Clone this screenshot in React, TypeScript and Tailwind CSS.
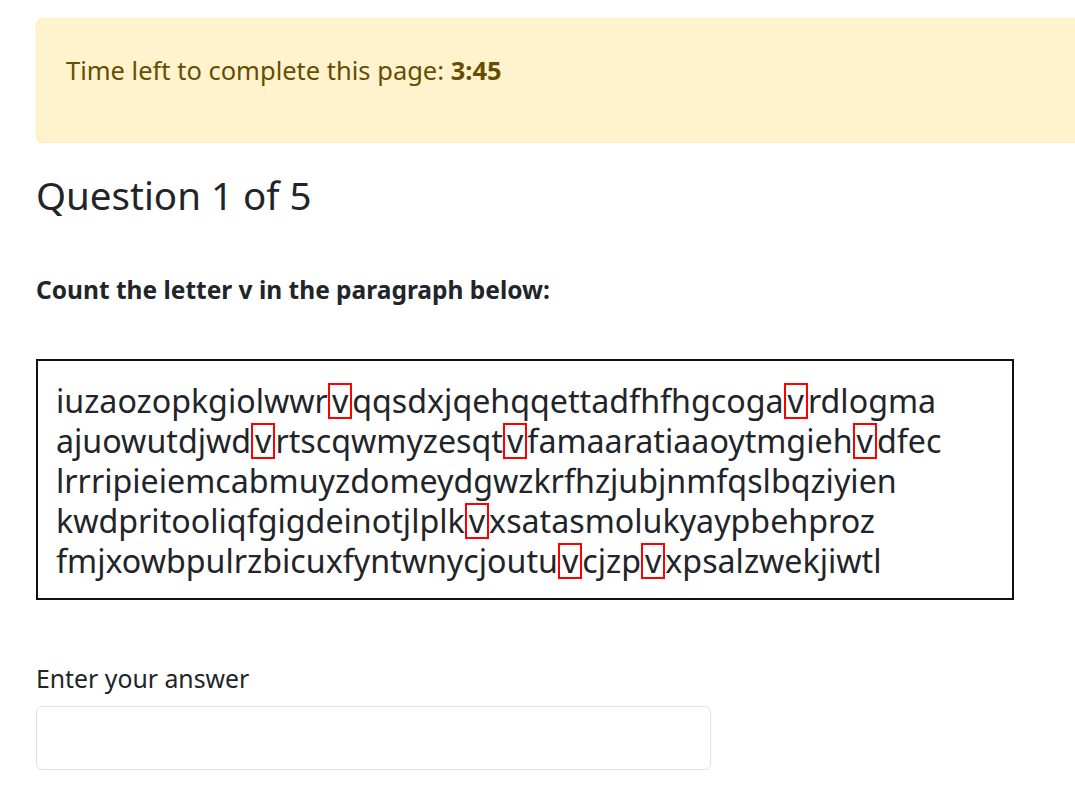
const lines = [
  "iuzaozopkgiolwwrvqqsdxjqehqqettadfhfhgcogavrdlogma",
  "ajuowutdjwdvrtscqwmyzesqtvfamaaratiaaoytmgiehvdfec",
  "lrrripieiemcabmuyzdomeydgwzkrfhzjubjnmfqslbqziyien",
  "kwdpritooliqfgigdeinotjlplkvxsatasmolukyaypbehproz",
  "fmjxowbpulrzbicuxfyntwnycjoutuvcjzpvxpsalzwekjiwtl",
];

const Line = ({ text }: { text: string }) => {
  const parts = text.split("v");
  return (
    <div>
      {parts.map((part, i) => (
        <span key={i}>
          {part}
          {i < parts.length - 1 && (
            <span className="inline-block border-2 border-[#ff0000] px-[2px] leading-none">
              v
            </span>
          )}
        </span>
      ))}
    </div>
  );
};

export default function App() {
  return (
    <div
      className="min-h-screen bg-white overflow-hidden text-[#212529]"
      style={{ fontFamily: '"Noto Sans", sans-serif' }}
    >
      <div className="pl-[36px] pt-[18px]">
        <div className="mr-[-40px] h-[125px] rounded-[6px] border border-[#ffeeba] bg-[#fff3cd] pl-[29px] pt-[33px] text-[25.5px] leading-[36px] text-[#664d03]">
          Time left to complete this page: <b>3:45</b>
        </div>

        <h3 className="mt-[27px] text-[38.5px] leading-[50px] font-normal">
          Question 1 of 5
        </h3>

        <p className="mt-[52px] text-[24.5px] leading-[36px] font-bold">
          Count the letter v in the paragraph below:
        </p>

        <div className="mt-[51px] w-[978px] border-2 border-[#111] pl-[18px] pt-[20px] pb-[17px] text-[32.2px] leading-[40px]">
          {lines.map((l) => (
            <Line key={l} text={l} />
          ))}
        </div>

        <label
          htmlFor="answer"
          className="mt-[60px] block text-[24.8px] leading-[36px]"
        >
          Enter your answer
        </label>
        <input
          id="answer"
          type="text"
          className="mt-[10px] block h-[64px] w-[675px] rounded-[6px] border-[1.5px] border-[#dee2e6] bg-white px-[18px] text-[24px] outline-none"
        />
      </div>
    </div>
  );
}
